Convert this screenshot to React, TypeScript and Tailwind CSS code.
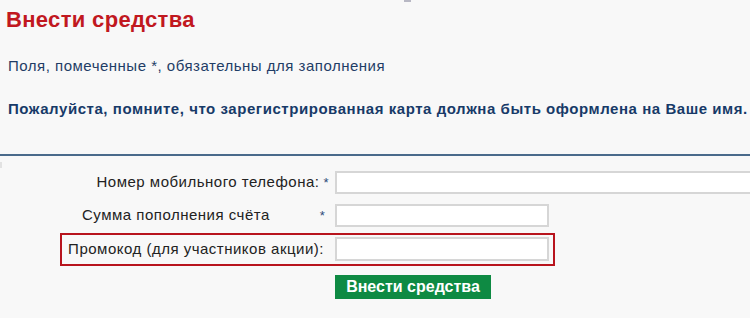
export default function App() {
  return (
    <div
      className="w-[750px] h-[318px] overflow-hidden bg-[#f8f8f8] relative"
      style={{ fontFamily: '"Liberation Sans", Arial, sans-serif' }}
    >
      {/* stray mark at top */}
      <div className="absolute left-[404px] top-0 w-[7px] h-[2px] bg-[#b8b8c4]" />

      {/* Header */}
      <h1 className="pl-[6px] pt-[6px] text-[22px] leading-[28px] font-bold tracking-[0.33px] text-[#c1181f]">
        Внести средства
      </h1>
      <p className="mt-[23px] pl-[8px] text-[15px] leading-[18px] tracking-[0.5px] text-[#1f3d66]">
        Поля, помеченные *, обязательны для заполнения
      </p>
      <p className="mt-[25px] pl-[8px] text-[15px] leading-[18px] tracking-[0.55px] font-bold text-[#173a68] whitespace-nowrap">
        Пожалуйста, помните, что зарегистрированная карта должна быть оформлена на Ваше имя.
      </p>

      <div className="mt-[36px] h-[2px] bg-[#4a6a8b]" />
      <div className="mt-[6px] w-[2px] h-[6px] bg-[#e2e2e2]" />

      {/* Form */}
      <div className="mt-[3px] flex flex-col text-[15px] tracking-[0.5px] text-[#222]">
        <div className="flex items-center">
          <div className="w-[335px] shrink-0 flex justify-end items-center pr-[6px]">
            <span>Номер мобильного телефона:</span>
            <span className="ml-[4px] text-[13px] text-[#2d4a78]">*</span>
          </div>
          <input className="w-[430px] h-[23px] bg-white border-2 border-[#d6d6d6] shrink-0" />
        </div>

        <div className="mt-[10px] flex items-center">
          <div className="w-[335px] shrink-0 flex items-center pl-[82px]">
            <span>Сумма пополнения счёта</span>
            <span className="ml-[50px] text-[13px] text-[#2d4a78]">*</span>
          </div>
          <input className="w-[214px] h-[23px] bg-white border-2 border-[#d6d6d6]" />
        </div>

        <div className="mt-[6px] ml-[60px] w-[495px] border-2 border-[#b8141d] flex items-center pt-[2px] pb-[3px] pr-[4px]">
          <div className="flex-1 flex justify-end pr-[11px]">
            <span>Промокод (для участников акции):</span>
          </div>
          <input className="w-[214px] h-[24px] bg-white border-2 border-[#d6d6d6]" />
        </div>

        <div className="mt-[9px] pl-[335px]">
          <button className="w-[156px] h-[24px] bg-[#0e8a43] text-white font-bold text-[16px] leading-[24px] tracking-normal">
            Внести средства
          </button>
        </div>
      </div>
    </div>
  );
}
